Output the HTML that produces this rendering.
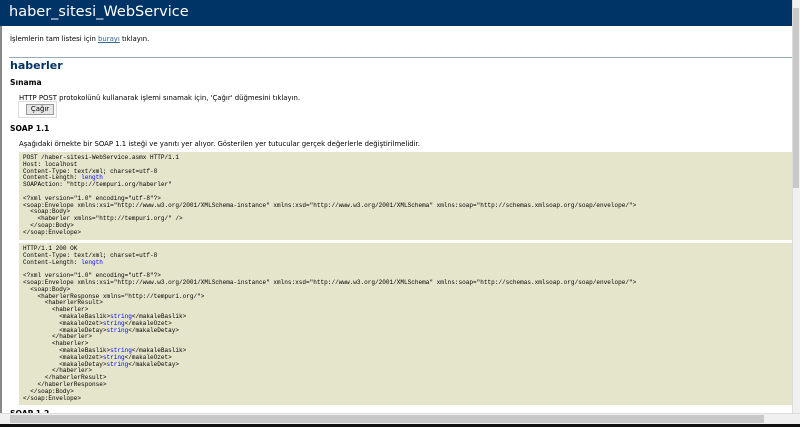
<!DOCTYPE html>
<html><head><meta charset="utf-8"><style>
*{margin:0;padding:0;box-sizing:border-box}
body{width:800px;height:427px;overflow:hidden;background:#fff;font-family:"DejaVu Sans","Liberation Sans",sans-serif;position:relative;color:#000}
.a{position:absolute;white-space:nowrap}
#hd{left:0;top:0;width:792px;height:26px;background:#003366;color:#fff;font-size:14.5px;padding:4px 0 0 9px;font-family:"DejaVu Sans",sans-serif}
.t{font-size:6.9px}
pre{position:absolute;left:19px;width:773px;background:#e5e5cc;font-family:"Liberation Mono","DejaVu Sans Mono",monospace;font-size:6.05px;line-height:6.8px;padding:3px 0 0 4px;color:#000}
pre i{font-style:normal;color:#00f}
</style></head><body>
<div style="position:absolute;left:0;top:0;width:2px;height:427px;background:#888"></div>
<div class="a" id="hd">haber_sitesi_WebService</div>
<div class="a t" style="left:10px;top:35px">İşlemlerin tam listesi için <b style="color:#336699;text-decoration:underline;font-weight:normal">burayı</b> tıklayın.</div>
<div class="a" style="left:9px;top:57px;width:783px;height:1px;background:#9aaabb"></div>
<div class="a" style="left:10px;top:59px;font-size:11px;font-weight:bold;color:#003366">haberler</div>
<div class="a" style="left:10px;top:78px;font-size:7.6px;font-weight:bold">Sınama</div>
<div class="a t" style="left:19px;top:94px">HTTP POST protokolünü kullanarak işlemi sınamak için, 'Çağır' düğmesini tıklayın.</div>
<div class="a" style="left:18px;top:101px;width:39px;height:17px;border:1px solid #ddd"></div>
<div class="a t" style="left:26px;top:104px;width:28px;height:11px;background:#e6e6e6;border:1px solid #999;text-align:center;line-height:9px">Çağır</div>
<div class="a" style="left:10px;top:124px;font-size:7.6px;font-weight:bold">SOAP 1.1</div>
<div class="a t" style="left:19px;top:140px">Aşağıdaki örnekte bir SOAP 1.1 isteği ve yanıtı yer alıyor. Gösterilen yer tutucular gerçek değerlerle değiştirilmelidir.</div>
<pre style="top:152px;height:88px">POST /haber-sitesi-WebService.asmx HTTP/1.1
Host: localhost
Content-Type: text/xml; charset=utf-8
Content-Length: <i>length</i>
SOAPAction: "http://tempuri.org/haberler"

&lt;?xml version="1.0" encoding="utf-8"?&gt;
&lt;soap:Envelope xmlns:xsi="http://www.w3.org/2001/XMLSchema-instance" xmlns:xsd="http://www.w3.org/2001/XMLSchema" xmlns:soap="http://schemas.xmlsoap.org/soap/envelope/"&gt;
  &lt;soap:Body&gt;
    &lt;haberler xmlns="http://tempuri.org/" /&gt;
  &lt;/soap:Body&gt;
&lt;/soap:Envelope&gt;</pre>
<pre style="top:243px;height:162px">HTTP/1.1 200 OK
Content-Type: text/xml; charset=utf-8
Content-Length: <i>length</i>

&lt;?xml version="1.0" encoding="utf-8"?&gt;
&lt;soap:Envelope xmlns:xsi="http://www.w3.org/2001/XMLSchema-instance" xmlns:xsd="http://www.w3.org/2001/XMLSchema" xmlns:soap="http://schemas.xmlsoap.org/soap/envelope/"&gt;
  &lt;soap:Body&gt;
    &lt;haberlerResponse xmlns="http://tempuri.org/"&gt;
      &lt;haberlerResult&gt;
        &lt;haberler&gt;
          &lt;makaleBaslik&gt;<i>string</i>&lt;/makaleBaslik&gt;
          &lt;makaleOzet&gt;<i>string</i>&lt;/makaleOzet&gt;
          &lt;makaleDetay&gt;<i>string</i>&lt;/makaleDetay&gt;
        &lt;/haberler&gt;
        &lt;haberler&gt;
          &lt;makaleBaslik&gt;<i>string</i>&lt;/makaleBaslik&gt;
          &lt;makaleOzet&gt;<i>string</i>&lt;/makaleOzet&gt;
          &lt;makaleDetay&gt;<i>string</i>&lt;/makaleDetay&gt;
        &lt;/haberler&gt;
      &lt;/haberlerResult&gt;
    &lt;/haberlerResponse&gt;
  &lt;/soap:Body&gt;
&lt;/soap:Envelope&gt;</pre>
<div class="a" style="left:10px;top:409px;font-size:7.6px;font-weight:bold">SOAP 1.2</div>
<div class="a" style="left:792px;top:0;width:8px;height:413px;background:#f0f0f0;border-left:1px solid #ddd"></div>
<div class="a" style="left:793px;top:8px;width:6px;height:180px;background:#c8c8c8"></div>
<div class="a" style="left:0;top:413px;width:800px;height:11px;background:#f0f0f0;border-top:1px solid #ddd"></div>
<div class="a" style="left:10px;top:415px;width:754px;height:8px;background:#c8c8c8"></div>
<div class="a" style="left:0;top:424px;width:800px;height:3px;background:#111"></div>
</body></html>
